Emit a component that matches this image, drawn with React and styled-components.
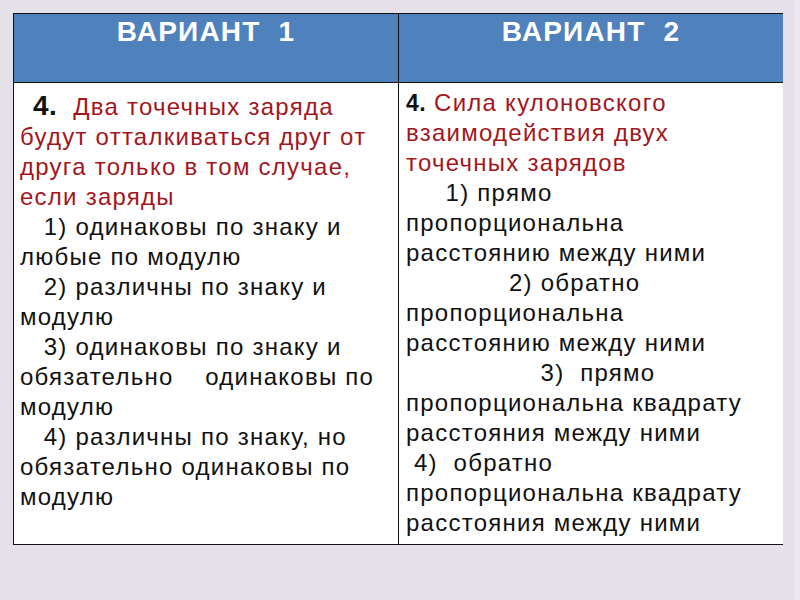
import React from "react";
import styled, { createGlobalStyle } from "styled-components";

const Global = createGlobalStyle`
  html, body { margin: 0; padding: 0; }
  body {
    background: #e5e1e9;
    width: 800px;
    height: 600px;
    overflow: hidden;
    font-family: "Liberation Sans", Arial, sans-serif;
  }
`;

const Page = styled.div`
  width: 800px;
  height: 600px;
  box-sizing: border-box;
  padding: 13px 0 0 13px;
  background: linear-gradient(to right, #e5e1e9 0, #e5e1e9 794px, #ebe8ee 794px);
`;

const Table = styled.div`
  width: 770px;
  display: grid;
  grid-template-columns: 384px 385px;
  grid-template-rows: 69px 461px;
  border: 1px solid #111;
  box-sizing: border-box;
  background: #fff;
`;

const HeadCell = styled.div`
  background: #4f81bd;
  color: #fff;
  font-weight: bold;
  font-size: 28px;
  line-height: 34px;
  letter-spacing: 1.2px;
  text-align: center;
  padding-top: 1px;
  box-sizing: border-box;
  border-bottom: 1px solid #111;
  border-left: ${(p) => (p.$divider ? "1px solid #111" : "none")};
  white-space: pre;
`;

const BodyCell = styled.div`
  background: #fff;
  box-sizing: border-box;
  padding: ${(p) => p.$pad};
  border-left: ${(p) => (p.$divider ? "1px solid #111" : "none")};
  font-size: 24px;
  letter-spacing: 1.25px;
  line-height: 30px;
  color: #111;
`;

const Line = styled.div`
  white-space: pre;
  color: ${(p) => (p.$red ? "#a3161c" : "#111")};
`;

const Num = styled.span`
  font-weight: bold;
  color: #111;
  letter-spacing: 0.5px;
  font-size: ${(p) => p.$size || "22px"};
  padding-left: ${(p) => p.$indent || "0px"};
`;

const Red = styled.span`
  color: #a3161c;
`;

export default function App() {
  return (
    <>
      <Global />
      <Page>
        <Table>
          <HeadCell>{"ВАРИАНТ  1"}</HeadCell>
          <HeadCell $divider>{"ВАРИАНТ  2"}</HeadCell>
          <BodyCell $pad="8px 0 0 6px">
            <Line>
              <Num $size="28px" $indent="13px">4.</Num>
              <Red>{"  Два точечных заряда"}</Red>
            </Line>
            <Line $red>будут отталкиваться друг от</Line>
            <Line $red>друга только в том случае,</Line>
            <Line $red>если заряды</Line>
            <Line>{"   1) одинаковы по знаку и"}</Line>
            <Line>любые по модулю</Line>
            <Line>{"   2) различны по знаку и"}</Line>
            <Line>модулю</Line>
            <Line>{"   3) одинаковы по знаку и"}</Line>
            <Line>{"обязательно    одинаковы по"}</Line>
            <Line>модулю</Line>
            <Line>{"   4) различны по знаку, но"}</Line>
            <Line>обязательно одинаковы по</Line>
            <Line>модулю</Line>
          </BodyCell>
          <BodyCell $divider $pad="5px 0 0 7px">
            <Line>
              <Num $size="23px">4.</Num>
              <Red>{" Сила кулоновского"}</Red>
            </Line>
            <Line $red>взаимодействия двух</Line>
            <Line $red>точечных зарядов</Line>
            <Line>{"     1) прямо"}</Line>
            <Line>пропорциональна</Line>
            <Line>расстоянию между ними</Line>
            <Line>{"             2) обратно"}</Line>
            <Line>пропорциональна</Line>
            <Line>расстоянию между ними</Line>
            <Line>{"                 3)  прямо"}</Line>
            <Line>пропорциональна квадрату</Line>
            <Line>расстояния между ними</Line>
            <Line>{" 4)  обратно"}</Line>
            <Line>пропорциональна квадрату</Line>
            <Line>расстояния между ними</Line>
          </BodyCell>
        </Table>
      </Page>
    </>
  );
}
